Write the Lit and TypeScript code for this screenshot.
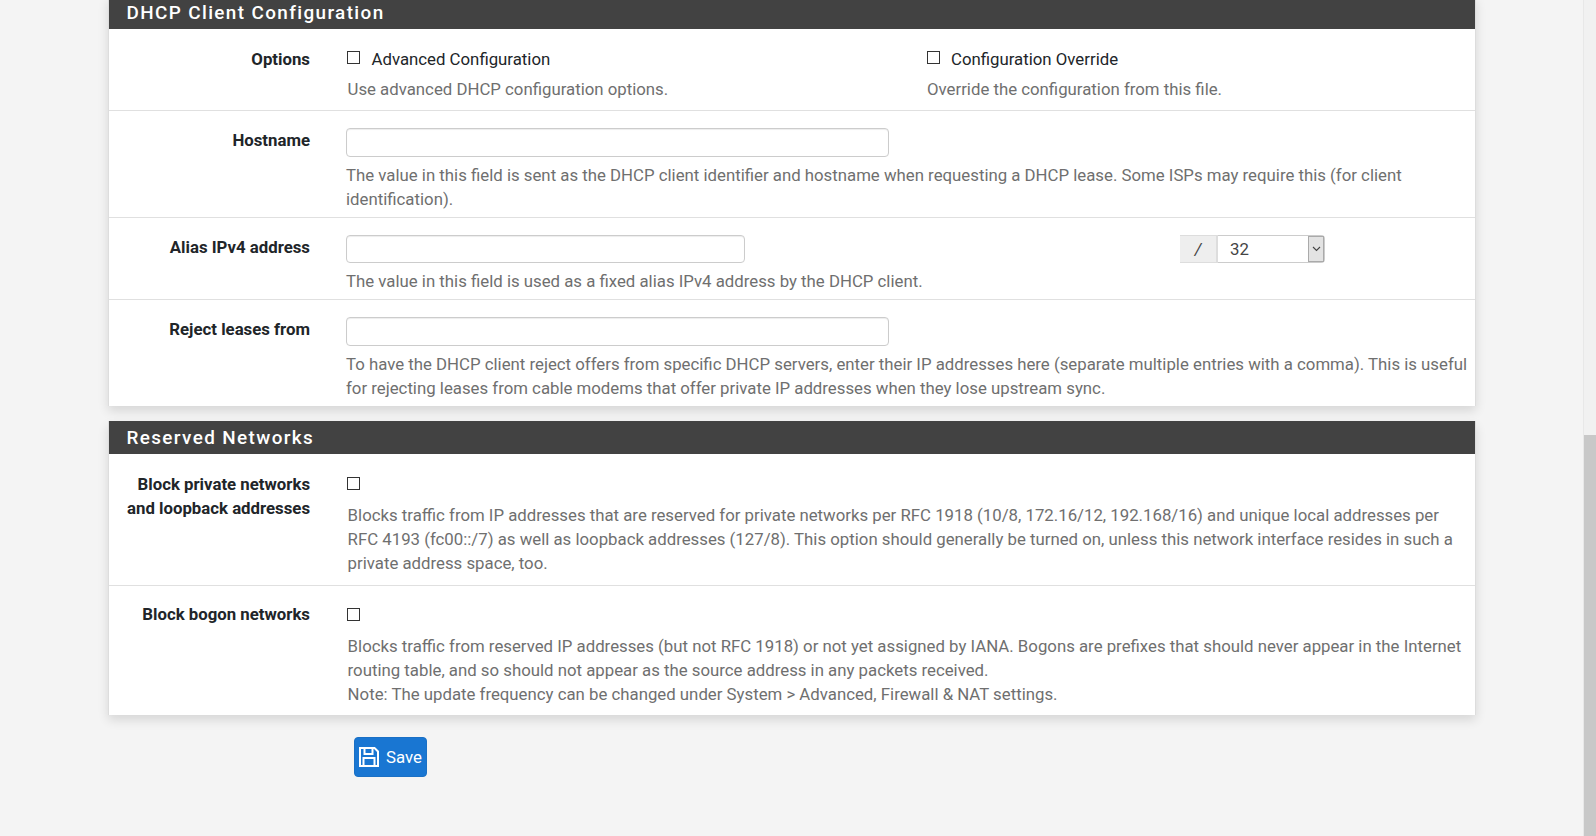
import { LitElement, html, css } from "lit";
import { customElement } from "lit/decorators.js";

@customElement("app-root")
export class AppRoot extends LitElement {
  static styles = css`
    :host { display: flex; width: 1596px; height: 836px; overflow: hidden; background: #f4f4f4; font-family: Roboto, "Liberation Sans", sans-serif; font-size: 16.8px; line-height: 24px; color: #212529; }
    * { box-sizing: border-box; }
    .page { flex: 1; padding: 0 107px 0 108px; min-width: 0; }
    .panel { background: #fff; border: solid #ddd; border-width: 0 1px; box-shadow: 0 5px 10px rgba(0,0,0,.12); margin-bottom: 15px; }
    .panel.first { margin-top: -4px; }
    .head { height: 33px; background: #424242; color: #fff; font-size: 18.9px; font-weight: 500; letter-spacing: 1.38px; line-height: 24px; padding: 5px 17px 4px 17.5px; }
    .row { display: grid; grid-template-columns: 201px 1fr; column-gap: 36px; border-top: 1px solid #e0e0e0; padding: 17px 7px 6px 0; }
    .head + .row { border-top: 0; }
    .lab { text-align: right; font-weight: 700; line-height: 24px; color: #212529; padding-left: 15px; }
    .hint { color: #6f6f6f; line-height: 24px; margin-top: 6px; }
    .in { display: block; width: 543px; height: 29px; border: 1px solid #ccc; border-radius: 4px; background: #fff; box-shadow: inset 0 1px 1px rgba(0,0,0,.075); }
    .in.short { width: 399px; height: 28px; }
    .between { display: flex; justify-content: space-between; }
    .mask { display: flex; width: 145px; height: 28px; margin-right: 143px; }
    .addon { width: 38px; background: #eee; border: 1px solid #ddd; border-width: 1px 2px 1px 0; text-align: center; font-style: italic; line-height: 26px; color: #444; }
    .sel { flex: 1; display: flex; justify-content: space-between; border: 1px solid #ccc; border-left: 0; border-radius: 0 4px 4px 0; padding-left: 12px; line-height: 26px; color: #444; }
    .arrow { width: 16px; background: #e3e3e3; border: 1px solid #aaa; display: flex; align-items: center; justify-content: center; }
    .arrow svg { width: 9px; height: 6px; }
    .opts { display: grid; grid-template-columns: 579.5px 1fr; margin-left: 1.5px; }
    .opts .check { margin-left: -.5px; }
    .check { display: flex; align-items: center; gap: 11.5px; height: 24px; }
    .box { width: 13px; height: 13px; border: 1px solid #333; background: #fff; margin-top: -3px; flex: none; }
    .wide { margin-left: 1px; }
    .wide .hint { margin-left: .6px; }
    .row.first { padding-top: 18px; padding-bottom: 9px; }
    .row.net-a { padding-top: 19px; padding-bottom: 10px; }
    .row.net-a .lab { margin-top: -1px; }
    .row.net-b { padding-top: 18px; padding-bottom: 9px; }
    .row.net-b .lab { margin-top: -2px; }
    .actions { padding-left: 246px; margin-top: 22px; }
    .save { display: inline-flex; align-items: center; gap: 7px; height: 40px; width: 73px; padding: 0 0 0 4px; background: #1976d2; color: #fff; border: 1px solid #1a70c5; border-radius: 4px; font-family: inherit; font-size: 16.8px; }
    .save svg { width: 20px; height: 20px; flex: none; }
    .scroll { width: 13px; background: #f1f1f1; border-left: 1px solid #e8e8e8; padding-top: 435px; }
    .thumb { height: 401px; background: #c8c8c8; }
  `;

  private check(label = "") {
    return html`<div class="check"><span class="box"></span>${label}</div>`;
  }

  render() {
    return html`
      <div class="page">
        <section class="panel first">
          <div class="head">DHCP Client Configuration</div>
          <div class="row first">
            <div class="lab">Options</div>
            <div class="opts">
              <div>${this.check("Advanced Configuration")}<div class="hint">Use advanced DHCP configuration options.</div></div>
              <div>${this.check("Configuration Override")}<div class="hint">Override the configuration from this file.</div></div>
            </div>
          </div>
          <div class="row">
            <div class="lab">Hostname</div>
            <div><input class="in" /><div class="hint">The value in this field is sent as the DHCP client identifier and hostname when requesting a DHCP lease. Some ISPs may require this (for client identification).</div></div>
          </div>
          <div class="row">
            <div class="lab">Alias IPv4 address</div>
            <div>
              <div class="between">
                <input class="in short" />
                <div class="mask">
                  <div class="addon">/</div>
                  <div class="sel">32<span class="arrow"><svg viewBox="0 0 9 6"><path d="M1 1l3.5 3.5L8 1" fill="none" stroke="#444" stroke-width="1.1"/></svg></span></div>
                </div>
              </div>
              <div class="hint">The value in this field is used as a fixed alias IPv4 address by the DHCP client.</div>
            </div>
          </div>
          <div class="row">
            <div class="lab">Reject leases from</div>
            <div><input class="in" /><div class="hint">To have the DHCP client reject offers from specific DHCP servers, enter their IP addresses here (separate multiple entries with a comma). This is useful for rejecting leases from cable modems that offer private IP addresses when they lose upstream sync.</div></div>
          </div>
        </section>
        <section class="panel">
          <div class="head">Reserved Networks</div>
          <div class="row net-a">
            <div class="lab">Block private networks and loopback addresses</div>
            <div class="wide">${this.check()}<div class="hint">Blocks traffic from IP addresses that are reserved for private networks per RFC 1918 (10/8, 172.16/12, 192.168/16) and unique local addresses per RFC 4193 (fc00::/7) as well as loopback addresses (127/8). This option should generally be turned on, unless this network interface resides in such a private address space, too.</div></div>
          </div>
          <div class="row net-b">
            <div class="lab">Block bogon networks</div>
            <div class="wide">${this.check()}<div class="hint">Blocks traffic from reserved IP addresses (but not RFC 1918) or not yet assigned by IANA. Bogons are prefixes that should never appear in the Internet routing table, and so should not appear as the source address in any packets received.<br />Note: The update frequency can be changed under System &gt; Advanced, Firewall &amp; NAT settings.</div></div>
          </div>
        </section>
        <div class="actions">
          <button class="save">
            <svg viewBox="0 0 20 20" fill="none" stroke="#fff" stroke-width="2"><path d="M1 1h14.5L19 4.5V19H1z"/><path d="M5.5 1v6h8V1M4.5 19v-8h11v8"/></svg>
            Save
          </button>
        </div>
      </div>
      <div class="scroll"><div class="thumb"></div></div>
    `;
  }
}
